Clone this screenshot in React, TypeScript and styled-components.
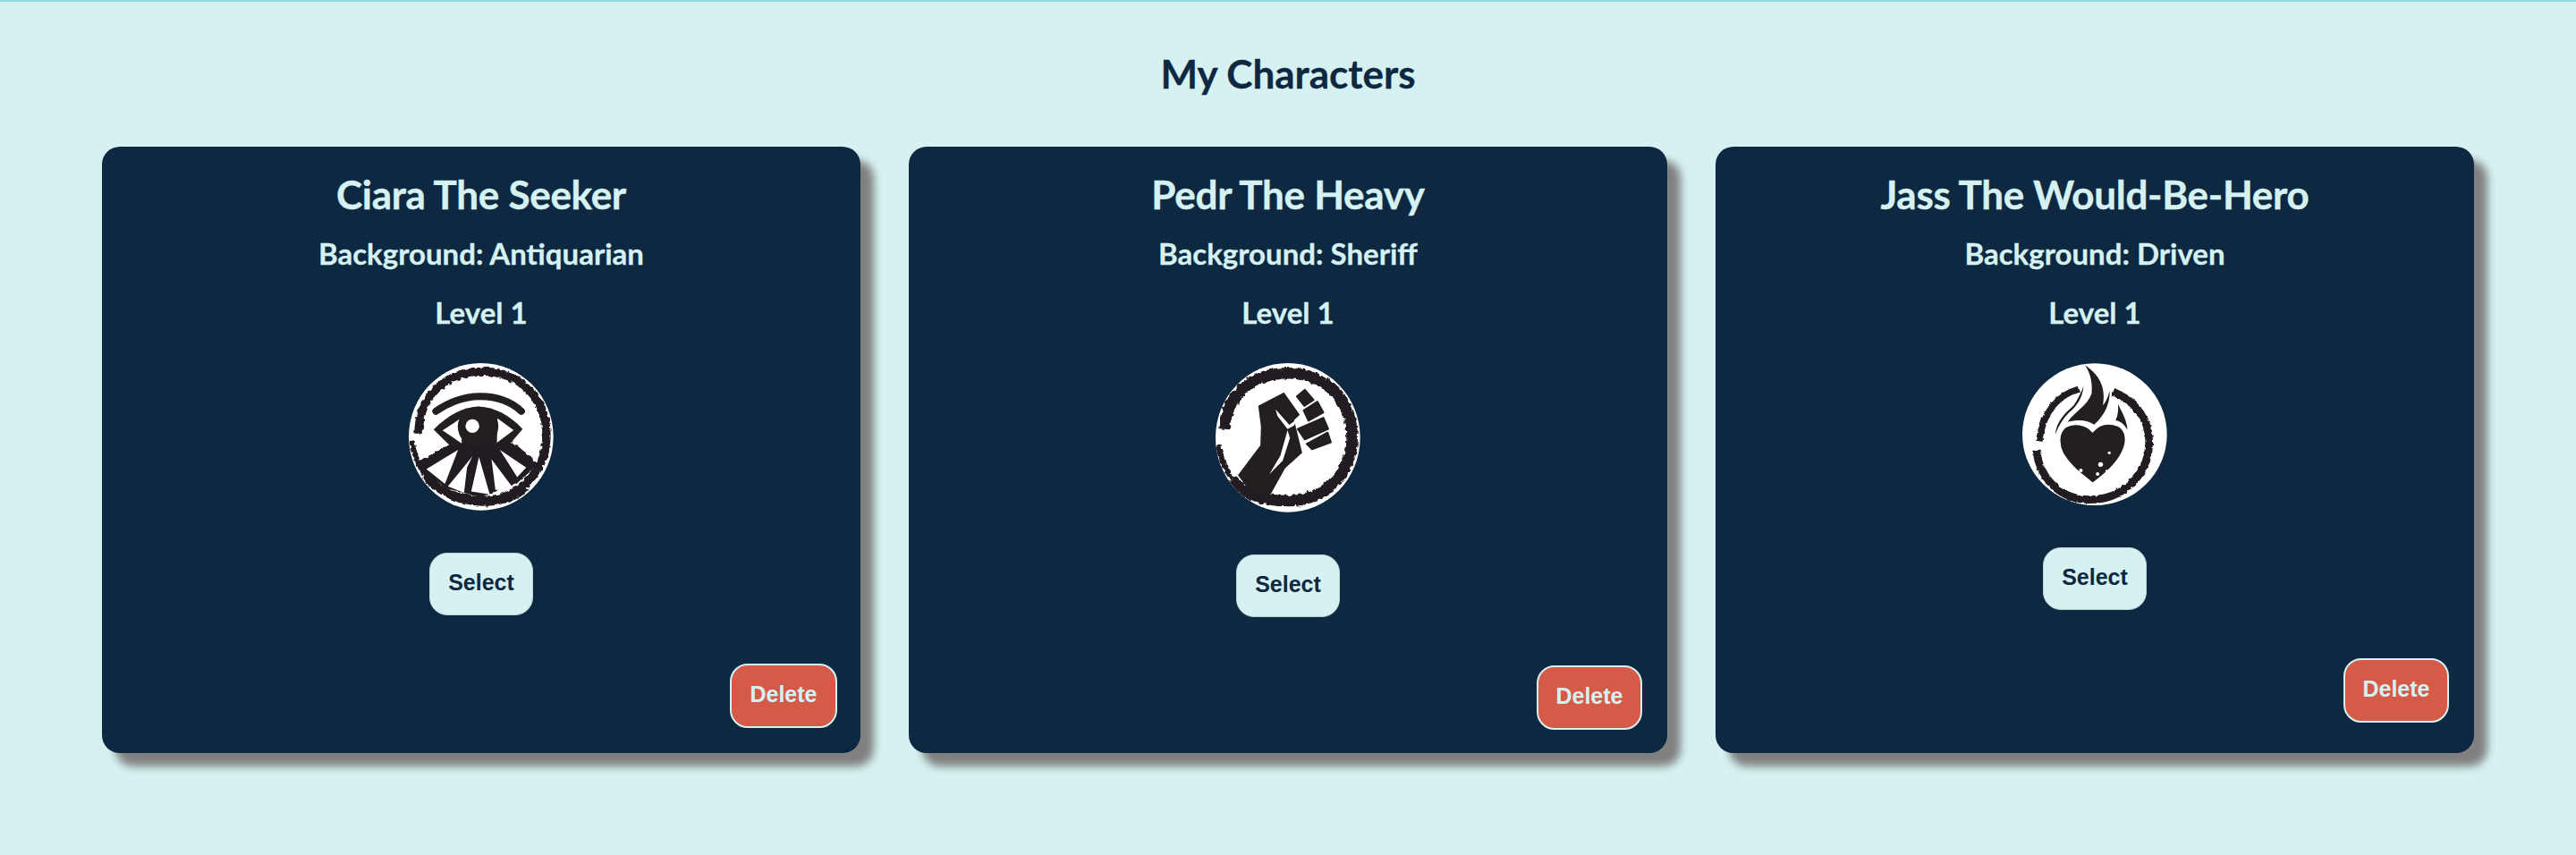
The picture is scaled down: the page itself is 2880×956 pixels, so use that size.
import React from 'react';
import styled, { createGlobalStyle } from 'styled-components';

const GlobalStyle = createGlobalStyle`
  html, body {
    margin: 0;
    padding: 0;
    background: #d6f1f1;
  }
`;

const Page = styled.main`
  box-sizing: border-box;
  min-height: 956px;
  padding: 0 114px;
  border-top: 2px solid #8fdcdc;
  background: #d6f1f1;
  font-family: Lato, "Open Sans", sans-serif;
`;

const PageTitle = styled.h1`
  margin: 0;
  padding: 55px 0 57px;
  color: #0d2840;
  font-size: 44px;
  line-height: 50px;
  font-weight: 700;
  text-align: center;
  -webkit-text-stroke: 0.3px #0d2840;
`;

const CardGrid = styled.div`
  display: grid;
  grid-template-columns: repeat(3, 848px);
  gap: 54px;
`;

const Card = styled.section`
  display: flex;
  flex-direction: column;
  align-items: center;
  box-sizing: border-box;
  padding: 26px 0 26px;
  border-radius: 20px;
  background: #0d2840;
  color: #d6f1f1;
  box-shadow: 15px 15px 10px #808080;
`;

const CharacterName = styled.h2`
  margin: 0;
  font-size: 44px;
  line-height: 54px;
  font-weight: 700;
  letter-spacing: -0.3px;
  -webkit-text-stroke: 0.4px #d6f1f1;
`;

const CharacterLine = styled.p`
  margin: 22px 0 0;
  font-size: 33px;
  line-height: 44px;
  font-weight: 700;
  -webkit-text-stroke: 0.3px #d6f1f1;

  &:first-of-type {
    margin-top: 17px;
  }
`;

const Portrait = styled.svg<{ $height: number }>`
  display: block;
  width: 162px;
  height: ${(p) => p.$height}px;
  margin-top: 35px;
`;

const SelectButton = styled.button`
  box-sizing: border-box;
  width: 116px;
  height: 70px;
  margin-top: 47px;
  padding: 0 0 3px;
  border: 1px solid #bcd6da;
  border-radius: 20px;
  background: #d6f1f1;
  color: #0d2840;
  font-family: "Liberation Sans", Arial, sans-serif;
  font-size: 25px;
  font-weight: 700;
`;

const DeleteButton = styled.button<{ $width: number; $inset: number }>`
  align-self: flex-end;
  box-sizing: border-box;
  width: ${(p) => p.$width}px;
  height: 72px;
  margin: 54px ${(p) => p.$inset}px 0 0;
  padding: 0 0 3px;
  border: 2px solid #d6f1f1;
  border-radius: 20px;
  background: #d55a48;
  color: #d6f1f1;
  font-family: "Liberation Sans", Arial, sans-serif;
  font-size: 25px;
  font-weight: 700;
`;

const INK = '#231f20';

const RoughFilter = ({ id, seed, scale }: { id: string; seed: number; scale: number }) => (
  <filter id={id} x="-5%" y="-5%" width="110%" height="110%">
    <feTurbulence type="fractalNoise" baseFrequency="0.07" numOctaves={2} seed={seed} />
    <feDisplacementMap in="SourceGraphic" scale={scale} xChannelSelector="R" yChannelSelector="G" />
  </filter>
);

const EyeIcon = () => (
  <Portrait $height={165} viewBox="55 48 485 497" preserveAspectRatio="none">
    <defs>
      <RoughFilter id="rough-eye" seed={3} scale={14} />
      <clipPath id="disc-eye">
        <ellipse cx="297" cy="296" rx="242" ry="248" />
      </clipPath>
    </defs>
    <ellipse cx="297" cy="296" rx="242" ry="248" fill="#fff" />
    <g clipPath="url(#disc-eye)">
      <g filter="url(#rough-eye)">
        <path d="M88 285 C88 160 180 76 300 76 C430 76 516 170 516 290 C516 420 420 510 300 510 C220 510 150 480 110 425" fill="none" stroke={INK} strokeWidth="28" />
        <path d="M66 312 C72 360 90 400 125 445 C170 495 230 518 300 520 C370 520 420 500 450 470" fill="none" stroke={INK} strokeWidth="18" />
        <path d="M195 320 L395 310 L490 388 L420 450 L300 500 L180 470 L110 420 L90 378 Z" fill={INK} />
      </g>
      <path d="M220 340 L114 405 L176 455 Z" fill="#fff" />
      <path d="M268 362 L186 463 L240 485 L250 400 Z" fill="#fff" />
      <path d="M290 364 L264 480 L326 490 Z" fill="#fff" />
      <path d="M332 372 L345 475 L405 470 Z" fill="#fff" />
      <path d="M360 340 L418 432 L448 400 Z" fill="#fff" />
    </g>
    <path d="M146 210 C200 172 245 160 295 160 C345 160 395 175 432 210" fill="none" stroke={INK} strokeWidth="24" strokeLinecap="round" />
    <path d="M138 272 C190 220 240 195 290 195 C340 195 395 225 436 270 L395 318 L195 328 Z" fill={INK} />
    <path d="M168 275 L232 232 L232 318 Z" fill="#fff" />
    <path d="M352 234 L406 274 L350 316 Z" fill="#fff" />
    <circle cx="287" cy="262" r="68" fill={INK} />
    <circle cx="268" cy="260" r="23" fill="#fff" />
  </Portrait>
);

const FistIcon = () => (
  <Portrait $height={167} viewBox="55 48 485 503" preserveAspectRatio="none">
    <defs>
      <RoughFilter id="rough-fist" seed={8} scale={16} />
      <clipPath id="disc-fist">
        <ellipse cx="297" cy="299" rx="242" ry="251" />
      </clipPath>
    </defs>
    <ellipse cx="297" cy="299" rx="242" ry="251" fill="#fff" />
    <g clipPath="url(#disc-fist)">
      <g filter="url(#rough-fist)">
        <path d="M84 270 C94 150 180 82 298 82 C425 82 512 175 512 300 C512 420 420 512 298 512 C220 512 150 490 110 440" fill="none" stroke={INK} strokeWidth="38" />
        <path d="M110 440 C85 400 70 360 66 325" fill="none" stroke={INK} strokeWidth="16" />
      </g>
      <path d="M130 425 L205 325 L207 262 L198 192 L284 147 L337 222 L318 240 L345 350 L288 402 L238 492 L170 480 Z" fill={INK} />
      <path d="M296 274 L272 360 L235 422 L280 376 L304 300 Z" fill="#fff" />
      <path d="M256 204 L302 256 L328 236 L318 258 L296 270 L262 226 Z" fill="#fff" />
    </g>
    <g fill={INK} stroke={INK} strokeWidth="6" strokeLinejoin="round">
      <path d="M327 160 L354 138 L383 172 L352 192 Z" />
      <path d="M350 207 L396 178 L416 214 L366 242 Z" />
      <path d="M330 270 L416 232 L432 270 L354 305 Z" />
      <path d="M360 320 L430 282 L441 315 L378 338 Z" />
    </g>
  </Portrait>
);

const HeartIcon = () => (
  <Portrait $height={159} viewBox="60 48 485 477" preserveAspectRatio="none">
    <defs>
      <RoughFilter id="rough-heart" seed={5} scale={10} />
      <clipPath id="disc-heart">
        <ellipse cx="302" cy="287" rx="242" ry="238" />
      </clipPath>
    </defs>
    <ellipse cx="302" cy="287" rx="242" ry="238" fill="#fff" />
    <g clipPath="url(#disc-heart)">
      <g filter="url(#rough-heart)">
        <path d="M248 136 C180 155 130 210 116 310" fill="none" stroke={INK} strokeWidth="22" />
        <path d="M364 144 C440 175 488 240 484 320 C480 430 390 506 285 506 C190 506 120 440 106 340" fill="none" stroke={INK} strokeWidth="26" />
      </g>
      <path d="M270 55 C320 90 340 130 330 190 C345 170 350 150 352 140 C355 180 335 225 300 254 C280 240 250 235 212 245 C235 210 275 195 292 150 C295 120 290 85 270 55 Z" fill={INK} />
      <path d="M170 288 C175 240 205 215 232 190 C245 170 258 145 265 125 C262 165 240 195 215 215 C195 235 180 260 170 288 Z" fill={INK} />
      <path d="M380 185 C395 215 410 240 412 272 C400 250 385 242 372 240 C380 225 382 205 380 185 Z" fill={INK} />
    </g>
    <path d="M295 278 C270 250 230 248 205 262 C180 280 180 320 195 350 C220 395 265 425 295 452 C330 425 375 390 395 345 C415 305 405 270 380 258 C345 245 315 255 295 278 Z" fill={INK} stroke="#fff" strokeWidth="5" />
    <circle cx="322" cy="388" r="8" fill="#fff" />
    <circle cx="351" cy="349" r="5" fill="#fff" />
    <circle cx="312" cy="420" r="6" fill="#fff" />
    <circle cx="256" cy="408" r="6" fill="#fff" />
    <circle cx="342" cy="410" r="4" fill="#fff" />
  </Portrait>
);

const characters = [
  { name: 'Ciara The Seeker', background: 'Antiquarian', level: 1, Icon: EyeIcon, deleteWidth: 120, deleteInset: 26 },
  { name: 'Pedr The Heavy', background: 'Sheriff', level: 1, Icon: FistIcon, deleteWidth: 118, deleteInset: 28 },
  { name: 'Jass The Would-Be-Hero', background: 'Driven', level: 1, Icon: HeartIcon, deleteWidth: 118, deleteInset: 28 },
];

export default function App() {
  return (
    <Page>
      <GlobalStyle />
      <PageTitle>My Characters</PageTitle>
      <CardGrid>
        {characters.map(({ name, background, level, Icon, deleteWidth, deleteInset }) => (
          <Card key={name}>
            <CharacterName>{name}</CharacterName>
            <CharacterLine>Background: {background}</CharacterLine>
            <CharacterLine>Level {level}</CharacterLine>
            <Icon />
            <SelectButton type="button">Select</SelectButton>
            <DeleteButton type="button" $width={deleteWidth} $inset={deleteInset}>Delete</DeleteButton>
          </Card>
        ))}
      </CardGrid>
    </Page>
  );
}
